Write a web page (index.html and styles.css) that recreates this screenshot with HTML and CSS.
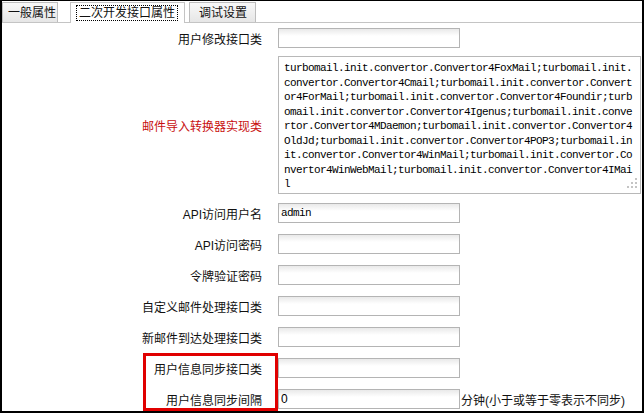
FILE: index.html
```
<!DOCTYPE html>
<html>
<head>
    <title>二次开发接口属性</title>
    <link rel="stylesheet" href="styles.css">
</head>
<body>
    <div class="frame">
        <div class="tabs">
            <span class="tab tab-first">一般属性</span>
            <span class="tab tab-active"><span class="focus">二次开发接口属性</span></span>
            <span class="tab">调试设置</span>
        </div>

        <div class="form">
            <div class="row">
                <label class="label">用户修改接口类</label>
                <input class="field" type="text">
            </div>
            <div class="row row-area">
                <label class="label label-red">邮件导入转换器实现类</label>
                <div class="area-wrap">
                    <textarea class="area">turbomail.init.convertor.Convertor4FoxMail;turbomail.init.convertor.Convertor4Cmail;turbomail.init.convertor.Convertor4ForMail;turbomail.init.convertor.Convertor4Foundir;turbomail.init.convertor.Convertor4Igenus;turbomail.init.convertor.Convertor4MDaemon;turbomail.init.convertor.Convertor4OldJd;turbomail.init.convertor.Convertor4POP3;turbomail.init.convertor.Convertor4WinMail;turbomail.init.convertor.Convertor4WinWebMail;turbomail.init.convertor.Convertor4IMail</textarea>
                    <svg class="grip" width="10" height="10" viewBox="0 0 10 10">
                        <rect x="8" y="0" width="2" height="2"/>
                        <rect x="4" y="4" width="2" height="2"/>
                        <rect x="8" y="4" width="2" height="2"/>
                        <rect x="0" y="8" width="2" height="2"/>
                        <rect x="4" y="8" width="2" height="2"/>
                        <rect x="8" y="8" width="2" height="2"/>
                    </svg>
                </div>
            </div>
            <div class="row">
                <label class="label">API访问用户名</label>
                <input class="field" type="text" value="admin">
            </div>
            <div class="row">
                <label class="label">API访问密码</label>
                <input class="field" type="password">
            </div>
            <div class="row">
                <label class="label">令牌验证密码</label>
                <input class="field" type="password">
            </div>
            <div class="row">
                <label class="label">自定义邮件处理接口类</label>
                <input class="field" type="text">
            </div>
            <div class="row">
                <label class="label">新邮件到达处理接口类</label>
                <input class="field" type="text">
            </div>
            <div class="row">
                <label class="label">用户信息同步接口类</label>
                <input class="field" type="text">
            </div>
            <div class="row">
                <label class="label">用户信息同步间隔</label>
                <input class="field field-num" type="text" value="0">
                <span class="hint">分钟(小于或等于零表示不同步)</span>
            </div>
        </div>

        <!-- annotation box around the two sync rows -->
        <div class="mark"></div>
    </div>
</body>
</html>
```

FILE: styles.css
```
body {
    margin: 0;
    padding: 0;
    background-color: #fff;
    font-family: "Liberation Sans", "Noto Sans CJK SC", sans-serif;
    font-size: 12px;
    color: #111;
}

/* black frame of the capture */
.frame {
    position: relative;
    width: 644px;
    height: 413px;
    box-sizing: border-box;
    border-style: solid;
    border-color: #000;
    border-width: 1px 2px 2px 2px;
    overflow: hidden;
    background-color: #fff;
}

/* Tabs */
.tabs {
    display: flex;
    align-items: flex-end;
    height: 21px;
    padding-top: 0;
    border-bottom: 1px solid #c4c4c4;
}

.tab {
    display: flex;
    align-items: center;
    height: 20px;
    box-sizing: border-box;
    padding: 0 8px 0 9px;
    margin-right: 4px;
    border: 1px solid #bdbdbd;
    border-bottom: none;
    background: linear-gradient(#f8f8f8, #e6e6e6);
    line-height: 14px;
}

.tab-first {
    padding: 0 1px 0 5px;
    margin-right: 12px;
}

.tab-active {
    height: 21px;
    margin-bottom: -1px;
    padding: 0 7px 0 6px;
    background: #fff;
    border-color: #c4c4c4;
}

.focus {
    padding: 1px 2px 0;
    line-height: 13px;
    outline: 1px dotted #000;
}

/* Form rows */
.row {
    display: flex;
    align-items: center;
    padding: 5px 0 6px;
}

.row-area {
    padding: 2px 0 4px;
}

.label {
    width: 260px;
    margin-right: 16px;
    text-align: right;
    flex-shrink: 0;
}

.label-red {
    color: #c80f0f;
}

.field {
    width: 182px;
    height: 20px;
    box-sizing: border-box;
    margin: 0;
    padding: 0 2px;
    border: 1px solid #b4b4b4;
    background: linear-gradient(#e9e9e9, #fff 7px);
    font-family: "Liberation Mono", monospace;
    font-size: 11px;
    letter-spacing: -0.6px;
    color: #000;
    outline: none;
}

.field-num {
    font-family: "Liberation Sans", sans-serif;
    font-size: 12px;
    letter-spacing: 0;
}

.hint {
    margin-left: 1px;
}

.area-wrap {
    position: relative;
    line-height: 0;
}

.area {
    display: block;
    width: 363px;
    height: 138px;
    box-sizing: border-box;
    margin: 0;
    padding: 4px 6px 0 5px;
    border: 1px solid #b8b8b8;
    font-family: "Liberation Mono", monospace;
    font-size: 11px;
    letter-spacing: -0.6px;
    line-height: 14.5px;
    color: #000;
    overflow: hidden;
    resize: none;
    outline: none;
}

.grip {
    position: absolute;
    right: 4px;
    bottom: 6px;
    fill: #c4c4c4;
}

/* red annotation rectangle */
.mark {
    position: absolute;
    left: 141px;
    top: 352px;
    width: 135px;
    height: 58px;
    box-sizing: border-box;
    border: 3px solid #e00000;
}
```
